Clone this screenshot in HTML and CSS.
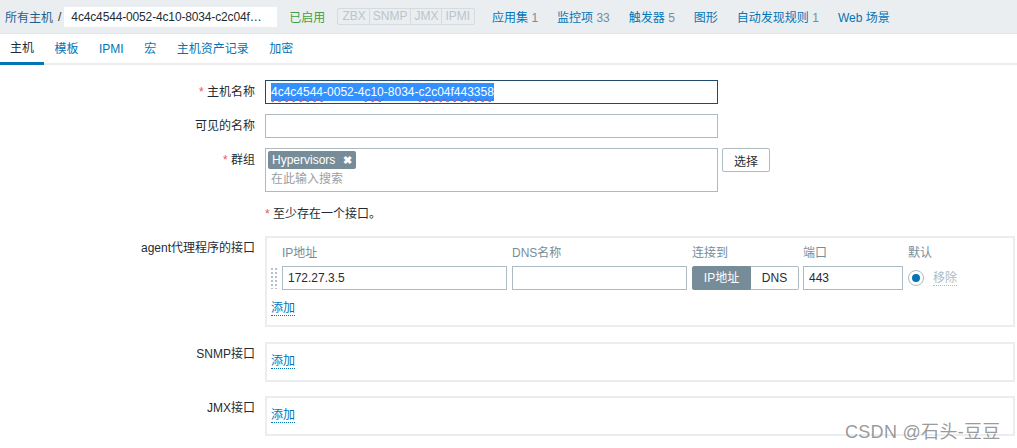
FILE: index.html
```html
<!DOCTYPE html>
<html lang="zh">
<head>
<meta charset="utf-8">
<title>主机</title>
<link rel="stylesheet" href="styles.css">
</head>
<body>
<div class="page">
  <div class="header">
    <a class="crumb">所有主机</a>
    <span class="sep">/</span>
    <span class="hostbox">4c4c4544-0052-4c10-8034-c2c04f…</span>
    <span class="enabled">已启用</span>
    <span class="status"><span>ZBX</span><span>SNMP</span><span>JMX</span><span>IPMI</span></span>
    <a class="hlink first">应用集 <span class="num">1</span></a>
    <a class="hlink">监控项 <span class="num">33</span></a>
    <a class="hlink">触发器 <span class="num">5</span></a>
    <a class="hlink">图形</a>
    <a class="hlink">自动发现规则 <span class="num">1</span></a>
    <a class="hlink">Web 场景</a>
  </div>
  <div class="tabs">
    <a class="tab active">主机</a>
    <a class="tab">模板</a>
    <a class="tab">IPMI</a>
    <a class="tab">宏</a>
    <a class="tab">主机资产记录</a>
    <a class="tab">加密</a>
  </div>

  <div class="form">
    <div class="row r-name">
      <div class="label"><span class="req">*</span> 主机名称</div>
      <div class="field">
        <div class="input focused"><span class="sel"><span class="sp">4c4c4544</span>-0052-4<span class="sp">c10</span>-8034-<span class="sp">c2c04f443358</span></span></div>
      </div>
    </div>
    <div class="row r-visible">
      <div class="label">可见的名称</div>
      <div class="field"><div class="input"></div></div>
    </div>
    <div class="row r-groups">
      <div class="label"><span class="req">*</span> 群组</div>
      <div class="field flexfield">
        <div class="multi">
          <span class="tag">Hypervisors <span class="x">✖</span></span>
          <div class="placeholder">在此输入搜索</div>
        </div>
        <button class="btn">选择</button>
      </div>
    </div>
    <div class="row r-note">
      <div class="label"></div>
      <div class="field note"><span class="req">*</span> 至少存在一个接口。</div>
    </div>
    <div class="row r-agent">
      <div class="label lbl-top">agent代理程序的接口</div>
      <div class="field">
        <div class="ibox agent">
          <div class="irow ihead">
            <span class="c-handle"></span>
            <span class="c-ip">IP地址</span>
            <span class="c-dns">DNS名称</span>
            <span class="c-conn">连接到</span>
            <span class="c-port">端口</span>
            <span class="c-def">默认</span>
          </div>
          <div class="irow">
            <span class="c-handle handle"></span>
            <div class="c-ip input">172.27.3.5</div>
            <div class="c-dns input"></div>
            <div class="c-conn seg"><span class="on">IP地址</span><span class="off">DNS</span></div>
            <div class="c-port input">443</div>
            <div class="c-def defcell"><span class="radio"><span class="dot"></span></span><span class="remove">移除</span></div>
          </div>
          <a class="add">添加</a>
        </div>
      </div>
    </div>
    <div class="row r-snmp">
      <div class="label lbl-top">SNMP接口</div>
      <div class="field"><div class="ibox small"><a class="add">添加</a></div></div>
    </div>
    <div class="row r-jmx">
      <div class="label lbl-top">JMX接口</div>
      <div class="field"><div class="ibox small"><a class="add">添加</a></div></div>
    </div>
  </div>
  <div class="watermark">CSDN @石头-豆豆</div>
</div>
</body>
</html>
```

FILE: styles.css
```css
* { box-sizing: border-box; }
body {
  margin: 0;
  font-family: "Liberation Sans", Arial, "Noto Sans CJK SC", sans-serif;
  font-size: 12px;
  color: #1f2c33;
  background: #fff;
}
.page { position: relative; width: 1017px; height: 448px; overflow: hidden; }
a { color: #0275b8; text-decoration: none; }

.header {
  height: 34px;
  background: #ebeef0;
  border-bottom: 1px solid #dfe4e7;
  display: flex;
  align-items: center;
  padding-left: 5px;
  white-space: nowrap;
}
.crumb { color: #1f5f8f; }
.sep { margin: 0 3px 0 5px; color: #1f2c33; }
.hostbox {
  background: #fff;
  height: 20px;
  width: 213px;
  padding: 0 0 0 7px;
  line-height: 20px;
  color: #1f2c33;
  overflow: hidden;
  letter-spacing: -0.15px;
}
.enabled { color: #429e47; margin-left: 12px; }
.status {
  display: flex;
  margin-left: 12px;
  border: 1px solid #d5dbde;
  border-radius: 2px;
  height: 17px;
  line-height: 15px;
  color: #bcc5ca;
  font-size: 12px;
}
.status span { padding: 0 3px; border-left: 1px solid #d5dbde; }
.status span:first-child { border-left: 0; padding-left: 4px; }
.status span:last-child { padding-right: 4px; }
.hlink { margin-left: 19px; }
.hlink.first { margin-left: 17px; }
.num { color: #768d99; }

.tabs {
  height: 31px;
  border-bottom: 2px solid #ebeef0;
  display: flex;
  align-items: stretch;
}
.tab {
  padding: 0 10px;
  line-height: 30px;
  color: #0275b8;
}
.tab + .tab { margin-left: 0.5px; }
.tab.active {
  color: #1f2c33;
  border-bottom: 3px solid #0275b8;
  margin-bottom: -2px;
  line-height: 28px;
}

.form { padding-top: 15px; }
.row { display: flex; }
.label {
  width: 265px;
  padding-right: 10px;
  text-align: right;
  line-height: 24px;
  flex: none;
}
.lbl-top { line-height: 16px; padding-top: 4px; }
.req { color: #e45959; }
.field { flex: none; }
.flexfield { display: flex; align-items: flex-start; gap: 4px; }

.input {
  height: 24px;
  width: 453px;
  border: 1px solid #acbbc2;
  background: #fff;
  padding: 0 5px;
  line-height: 22px;
  white-space: nowrap;
}
.input.focused { border-color: #1f4b6e; }
.sel { background: #3390ff; color: #fff; padding: 2px 0; }
.sp { text-decoration: underline wavy #e33; text-decoration-thickness: 1px; text-underline-offset: 2px; }

.r-name { margin-top: 0; }
.r-visible { margin-top: 10px; }
.r-groups { margin-top: 10px; }
.multi {
  width: 453px;
  height: 44px;
  border: 1px solid #acbbc2;
  padding: 2px 2px;
}
.tag {
  display: inline-block;
  background: #768d99;
  color: #fff;
  height: 18px;
  line-height: 18px;
  padding: 0 4px 0 4px;
  border-radius: 2px;
}
.tag .x { font-size: 11px; font-weight: bold; margin-left: 4px; }
.placeholder { color: #999fa3; padding: 3px 3px 0; line-height: 14px; }
.btn {
  font: inherit;
  color: #1f2c33;
  background: #fff;
  border: 1px solid #acbbc2;
  border-radius: 2px;
  height: 24px;
  width: 48px;
  padding: 0;
}

.r-note { margin-top: 14px; }
.note { line-height: 16px; }

.r-agent { margin-top: 14px; }
.ibox {
  width: 750px;
  border: 2px solid #ebeef0;
  padding: 4px 4px 0 2px;
}
.agent { height: 91px; }
.irow { display: flex; align-items: center; gap: 0; }
.ihead { color: #768d99; height: 22px; line-height: 18px; align-items: flex-start; margin-top: 2px; }
.c-handle { width: 13px; flex: none; }
.c-ip { width: 225px; margin-right: 5px; flex: none; }
.c-dns { width: 175px; margin-right: 5px; flex: none; }
.c-conn { width: 107px; margin-right: 4px; flex: none; }
.c-port { width: 100px; margin-right: 5px; flex: none; }
.c-def { flex: none; }
.irow .input { height: 24px; }
.handle {
  height: 22px;
  width: 13px;
  margin-left: 1px;
  margin-right: -1px;
  background-image: radial-gradient(circle, #b7c2c8 1px, transparent 1.2px);
  background-size: 4px 4px;
  background-repeat: repeat;
  background-position: 0 0;
  background-clip: content-box;
  padding-right: 5px;
}
.seg { display: flex; height: 24px; }
.seg span { line-height: 22px; text-align: center; }
.seg .on { width: 59px; background: #768d99; color: #fff; border: 1px solid #768d99; border-radius: 2px 0 0 2px; }
.seg .off { width: 48px; border: 1px solid #acbbc2; border-left: 0; border-radius: 0 2px 2px 0; }
.defcell { display: flex; align-items: center; }
.radio {
  width: 16px; height: 16px;
  border: 1px solid #acbbc2;
  border-radius: 50%;
  display: flex; align-items: center; justify-content: center;
}
.dot { width: 8px; height: 8px; border-radius: 50%; background: #0275b8; }
.remove { margin-left: 9px; color: #acbbc2; border-bottom: 1px dotted #acbbc2; line-height: 14px; }
.add {
  display: inline-block;
  margin-top: 11px;
  border-bottom: 1px dotted #0275b8;
  line-height: 14px;
  margin-left: 2px;
}
.small { height: 40px; padding-top: 10px; }
.small .add { margin-top: 0; }
.r-snmp { margin-top: 15px; }
.r-jmx { margin-top: 14px; }

.watermark {
  position: absolute;
  left: 845px;
  top: 417px;
  font-size: 18px;
  color: rgba(110, 110, 110, 0.7);
  white-space: nowrap;
  letter-spacing: 0.3px;
}
```
